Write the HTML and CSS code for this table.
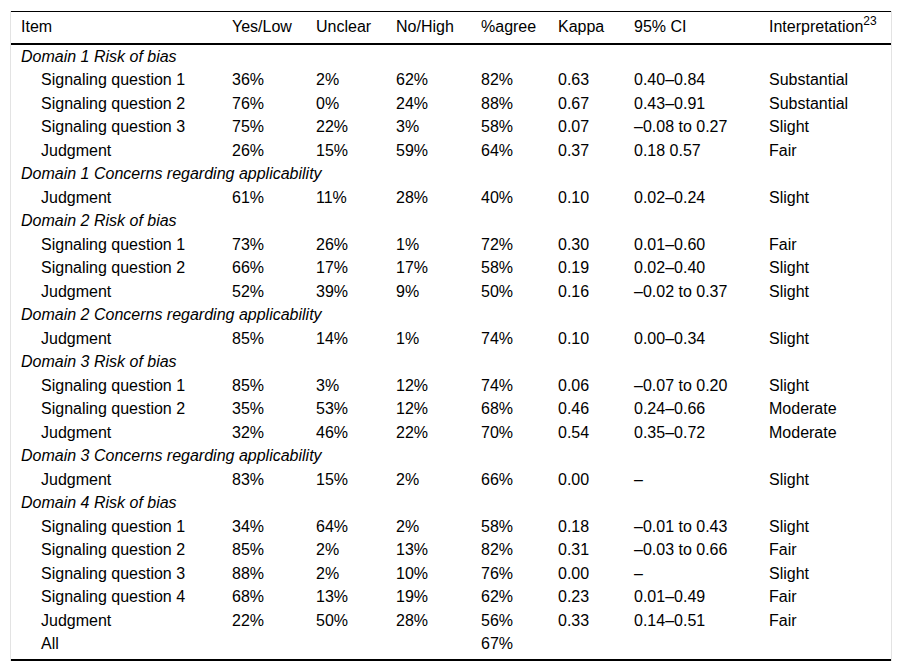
FILE: index.html
```html
<!DOCTYPE html>
<html lang="en">
<head>
<meta charset="utf-8">
<title>Agreement table</title>
<link rel="stylesheet" href="styles.css">
</head>
<body>
<div class="frame">
<table class="agree">
<colgroup>
<col class="c-item"><col class="c-yes"><col class="c-unc"><col class="c-no"><col class="c-pct"><col class="c-kap"><col class="c-ci"><col class="c-int">
</colgroup>
<thead>
<tr><th>Item</th><th>Yes/Low</th><th>Unclear</th><th>No/High</th><th>%agree</th><th>Kappa</th><th>95% CI</th><th>Interpretation<sup>23</sup></th></tr>
</thead>
<tbody>
<tr class="dom"><td colspan="8">Domain 1 Risk of bias</td></tr>
<tr><td class="ind">Signaling question 1</td><td>36%</td><td>2%</td><td>62%</td><td>82%</td><td>0.63</td><td>0.40–0.84</td><td>Substantial</td></tr>
<tr><td class="ind">Signaling question 2</td><td>76%</td><td>0%</td><td>24%</td><td>88%</td><td>0.67</td><td>0.43–0.91</td><td>Substantial</td></tr>
<tr><td class="ind">Signaling question 3</td><td>75%</td><td>22%</td><td>3%</td><td>58%</td><td>0.07</td><td>–0.08 to 0.27</td><td>Slight</td></tr>
<tr><td class="ind">Judgment</td><td>26%</td><td>15%</td><td>59%</td><td>64%</td><td>0.37</td><td>0.18 0.57</td><td>Fair</td></tr>
<tr class="dom"><td colspan="8">Domain 1 Concerns regarding applicability</td></tr>
<tr><td class="ind">Judgment</td><td>61%</td><td>11%</td><td>28%</td><td>40%</td><td>0.10</td><td>0.02–0.24</td><td>Slight</td></tr>
<tr class="dom"><td colspan="8">Domain 2 Risk of bias</td></tr>
<tr><td class="ind">Signaling question 1</td><td>73%</td><td>26%</td><td>1%</td><td>72%</td><td>0.30</td><td>0.01–0.60</td><td>Fair</td></tr>
<tr><td class="ind">Signaling question 2</td><td>66%</td><td>17%</td><td>17%</td><td>58%</td><td>0.19</td><td>0.02–0.40</td><td>Slight</td></tr>
<tr><td class="ind">Judgment</td><td>52%</td><td>39%</td><td>9%</td><td>50%</td><td>0.16</td><td>–0.02 to 0.37</td><td>Slight</td></tr>
<tr class="dom"><td colspan="8">Domain 2 Concerns regarding applicability</td></tr>
<tr><td class="ind">Judgment</td><td>85%</td><td>14%</td><td>1%</td><td>74%</td><td>0.10</td><td>0.00–0.34</td><td>Slight</td></tr>
<tr class="dom"><td colspan="8">Domain 3 Risk of bias</td></tr>
<tr><td class="ind">Signaling question 1</td><td>85%</td><td>3%</td><td>12%</td><td>74%</td><td>0.06</td><td>–0.07 to 0.20</td><td>Slight</td></tr>
<tr><td class="ind">Signaling question 2</td><td>35%</td><td>53%</td><td>12%</td><td>68%</td><td>0.46</td><td>0.24–0.66</td><td>Moderate</td></tr>
<tr><td class="ind">Judgment</td><td>32%</td><td>46%</td><td>22%</td><td>70%</td><td>0.54</td><td>0.35–0.72</td><td>Moderate</td></tr>
<tr class="dom"><td colspan="8">Domain 3 Concerns regarding applicability</td></tr>
<tr><td class="ind">Judgment</td><td>83%</td><td>15%</td><td>2%</td><td>66%</td><td>0.00</td><td>–</td><td>Slight</td></tr>
<tr class="dom"><td colspan="8">Domain 4 Risk of bias</td></tr>
<tr><td class="ind">Signaling question 1</td><td>34%</td><td>64%</td><td>2%</td><td>58%</td><td>0.18</td><td>–0.01 to 0.43</td><td>Slight</td></tr>
<tr><td class="ind">Signaling question 2</td><td>85%</td><td>2%</td><td>13%</td><td>82%</td><td>0.31</td><td>–0.03 to 0.66</td><td>Fair</td></tr>
<tr><td class="ind">Signaling question 3</td><td>88%</td><td>2%</td><td>10%</td><td>76%</td><td>0.00</td><td>–</td><td>Slight</td></tr>
<tr><td class="ind">Signaling question 4</td><td>68%</td><td>13%</td><td>19%</td><td>62%</td><td>0.23</td><td>0.01–0.49</td><td>Fair</td></tr>
<tr><td class="ind">Judgment</td><td>22%</td><td>50%</td><td>28%</td><td>56%</td><td>0.33</td><td>0.14–0.51</td><td>Fair</td></tr>
<tr class="last"><td class="ind">All</td><td></td><td></td><td></td><td>67%</td><td></td><td></td><td></td></tr>
</tbody>
</table>
</div>
</body>
</html>
```
FILE: styles.css
```css
html, body {
  margin: 0;
  padding: 0;
  background: #fff;
}

body {
  font-family: "Liberation Sans", Arial, Helvetica, sans-serif;
  font-size: 16px;
  color: #000;
}

.frame {
  margin: 11px 0 0 10px;
  width: 880px;
  border-left: 1px solid #e3e3e3;
  border-right: 1px solid #e3e3e3;
}

.agree {
  width: 880px;
  table-layout: fixed;
  border-collapse: collapse;
  border-top: 1px solid #000;
  border-bottom: 2px solid #000;
}

.c-item { width: 211px; }
.c-yes { width: 84px; }
.c-unc { width: 80px; }
.c-no { width: 85px; }
.c-pct { width: 77px; }
.c-kap { width: 76px; }
.c-ci { width: 135px; }
.c-int { width: 132px; }

.agree th {
  font-weight: normal;
  text-align: left;
  padding: 5px 0 6.5px 10px;
  line-height: 19.5px;
  height: 31px;
  box-sizing: border-box;
  white-space: nowrap;
  border-bottom: 2px solid #000;
  vertical-align: top;
}

.agree th sup {
  font-size: 12px;
  line-height: 0;
  position: relative;
  top: -1px;
}

.agree td {
  padding: 1.5px 0 2.5px 10px;
  line-height: 19.5px;
  white-space: nowrap;
  vertical-align: top;
}

.agree .dom td {
  font-style: italic;
}

.agree td.ind {
  padding-left: 30px;
}

.agree .last td {
  padding-bottom: 5px;
}
```
